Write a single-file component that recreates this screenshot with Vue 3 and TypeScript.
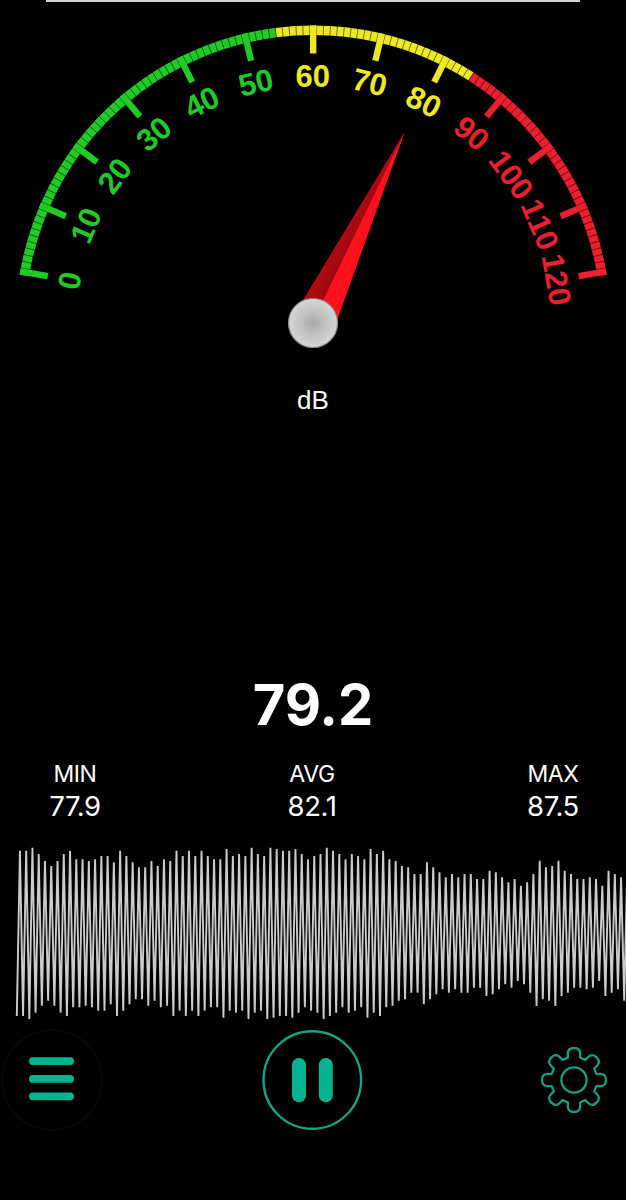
<script setup lang="ts">
interface Stat {
  label: string
  value: string
}

const CX = 313.2
const CY = 323
const OUTER = 297.5
const BAND = 9.5
const DEG_PER_DB = 160 / 120

const angleOf = (db: number): number => (db - 60) * DEG_PER_DB

const colorOf = (db: number): string => {
  if (db < 54.5) return '#20cb26'
  if (db < 84.5) return '#ece924'
  return '#eb1f2d'
}

const pointAt = (db: number, radius: number): string => {
  const a = (angleOf(db) * Math.PI) / 180
  return `${(CX + radius * Math.sin(a)).toFixed(2)} ${(CY - radius * Math.cos(a)).toFixed(2)}`
}

const arc = (from: number, to: number): string => {
  const r = OUTER - BAND / 2
  return `M${pointAt(from, r)}A${r} ${r} 0 0 1 ${pointAt(to, r)}`
}

const zones = [
  { d: arc(-0.5, 54.5), color: '#20cb26' },
  { d: arc(54.5, 84.5), color: '#ece924' },
  { d: arc(84.5, 120.5), color: '#eb1f2d' },
]

const separators = Array.from({ length: 120 }, (_, i) => angleOf(i + 0.5))

const majors = Array.from({ length: 13 }, (_, i) => ({
  value: i * 10,
  angle: angleOf(i * 10),
  color: colorOf(i * 10),
}))

const reading = '79.2'
const stats: Stat[] = [
  { label: 'MIN', value: '77.9' },
  { label: 'AVG', value: '82.1' },
  { label: 'MAX', value: '87.5' },
]

// Distance of every peak from the top of the wave strip, in thirds of a pixel.
const peaks = [
  47, 47, 38, 57, 78, 93, 78, 57, 47, 73, 73, 78, 73, 63, 63, 82, 47, 63, 82, 97, 97, 78, 93, 73, 78,
  47, 63, 47, 63, 47, 63, 73, 73, 42, 63, 57, 63, 38, 57, 63, 38, 42, 47, 47, 42, 57, 73, 63, 57, 38,
  47, 57, 73, 57, 63, 73, 42, 57, 47, 73, 78, 93, 97, 117, 117, 82, 97, 112, 127, 117, 127, 117, 117,
  132, 132, 107, 112, 127, 142, 132, 152, 142, 117, 77, 97, 93, 77, 107, 117, 132, 132, 127, 132, 152,
  107, 117, 127, 93,
]
const STEP = 6.262
const wave = peaks
  .map((p, i) => {
    const x = 16.8 + i * STEP
    return `${x.toFixed(2)},${((590 - p) / 3).toFixed(2)} ${(x + STEP / 2).toFixed(2)},${(p / 3).toFixed(2)}`
  })
  .join(' ')

// One tooth repeated eight times around the origin.
const tooth: [string, number[][]][] = [
  ['L', [[-18.5, -67]]],
  ['L', [[-18.5, -79]]],
  ['C', [[-18.5, -90], [-12, -96], [0, -96]]],
  ['C', [[12, -96], [18.5, -90], [18.5, -79]]],
  ['L', [[18.5, -67]]],
]
const gear =
  Array.from({ length: 8 }, (_, k) => {
    const a = (k * Math.PI) / 4
    return tooth
      .map(([cmd, pts], i) => {
        const op = k === 0 && i === 0 ? 'M' : cmd
        const coords = pts.map(([x, y]) => {
          const rx = x * Math.cos(a) - y * Math.sin(a)
          const ry = x * Math.sin(a) + y * Math.cos(a)
          return `${(rx / 3).toFixed(2)} ${(ry / 3).toFixed(2)}`
        })
        return op + coords.join(' ')
      })
      .join('')
  }).join('') + 'Z'
</script>

<template>
  <main class="meter">
    <div class="topline"></div>

    <svg class="gauge" viewBox="0 0 626 428" width="626" height="428">
      <defs>
        <radialGradient id="hub">
          <stop offset="0" stop-color="#a9a9a9" />
          <stop offset="0.55" stop-color="#c4c4c4" />
          <stop offset="1" stop-color="#d6d6d6" />
        </radialGradient>
        <linearGradient id="shade" gradientUnits="userSpaceOnUse" x1="328" y1="236" x2="362" y2="254">
          <stop offset="0" stop-color="#b80c13" />
          <stop offset="0.45" stop-color="#a80a10" />
          <stop offset="1" stop-color="#7c060a" />
        </linearGradient>
      </defs>

      <path v-for="z in zones" :key="z.color" :d="z.d" :stroke="z.color" :stroke-width="BAND" fill="none" />
      <line
        v-for="a in separators"
        :key="a"
        class="separator"
        :x1="CX"
        :x2="CX"
        :y1="CY - OUTER - 0.5"
        :y2="CY - OUTER + BAND + 0.5"
        :transform="`rotate(${a} ${CX} ${CY})`"
      />
      <g v-for="m in majors" :key="m.value" :transform="`rotate(${m.angle} ${CX} ${CY})`" :fill="m.color">
        <rect :x="CX - 3.2" :y="CY - OUTER" width="6.4" height="28" />
        <text class="mark" :x="CX - 0.5" y="86.5">{{ m.value }}</text>
      </g>

      <polygon points="404.8,131.5 295,313.5 313,322 335.5,324" fill="url(#shade)" />
      <polygon points="404.8,131.5 313,321 336,323" fill="#ff101d" />
      <circle cx="313" cy="323" r="24.5" fill="url(#hub)" stroke="#8c8c8c" stroke-width="1.2" />
      <text class="unit" x="313" y="409">dB</text>
    </svg>

    <div class="reading">{{ reading }}</div>

    <div class="stats">
      <div v-for="s in stats" :key="s.label" class="stat">
        <span class="label">{{ s.label }}</span>
        <span class="value">{{ s.value }}</span>
      </div>
    </div>

    <svg class="wave" viewBox="0 0 626 192" width="626" height="192">
      <polyline :points="wave" />
    </svg>

    <nav class="controls">
      <button class="control menu" aria-label="Menu">
        <svg viewBox="0 0 104 104" width="104" height="104">
          <circle cx="52" cy="52" r="50" stroke="#03090b" stroke-width="2" fill="none" />
          <g fill="#04b491">
            <rect x="29" y="29.2" width="45" height="7.8" rx="3.9" />
            <rect x="29" y="47" width="45" height="7.8" rx="3.9" />
            <rect x="29" y="64.4" width="45" height="7.8" rx="3.9" />
          </g>
        </svg>
      </button>
      <button class="control pause" aria-label="Pause">
        <svg viewBox="0 0 104 104" width="104" height="104">
          <circle cx="51.3" cy="52" r="48.8" stroke="#16a386" stroke-width="2.4" fill="none" />
          <g fill="#04b491">
            <rect x="31" y="30" width="14" height="44.3" rx="7" />
            <rect x="57.8" y="30" width="14" height="44.3" rx="7" />
          </g>
        </svg>
      </button>
      <button class="control settings" aria-label="Settings">
        <svg viewBox="-52 -52 104 104" width="104" height="104">
          <g stroke="#169e82" stroke-width="2.3" fill="none" stroke-linejoin="round">
            <path :d="gear" />
            <circle r="12.6" />
          </g>
        </svg>
      </button>
    </nav>
  </main>
</template>

<style>
html,
body {
  background: #000;
}
</style>

<style scoped>
.meter {
  display: flex;
  flex-direction: column;
  width: 626px;
  height: 1200px;
  overflow: hidden;
  background: #000;
  color: #fff;
  font-family: Inter, 'Liberation Sans', sans-serif;
}
.topline {
  flex: none;
  width: 534px;
  height: 2px;
  margin: 0 0 -2px 46px;
  background: #d0d5d9;
}
.gauge,
.wave,
.control svg {
  display: block;
  flex: none;
}
.separator {
  stroke: #000;
  stroke-opacity: 0.7;
  stroke-width: 0.7;
}
.mark {
  font: bold 31px 'Liberation Sans', Arial, sans-serif;
  font-kerning: none;
  text-anchor: middle;
}
.unit {
  font: 26px 'Liberation Sans', Arial, sans-serif;
  text-anchor: middle;
  fill: #fff;
}
.reading {
  flex: none;
  height: 70px;
  margin-top: 241.5px;
  margin-bottom: 0.5px;
  font-size: 56px;
  font-weight: 700;
  line-height: 70px;
  text-align: center;
}
.stats {
  display: flex;
  flex: none;
  justify-content: space-between;
  height: 95px;
  padding: 18px 13px 0 15px;
  box-sizing: border-box;
}
.stat {
  display: flex;
  flex-direction: column;
  align-items: center;
  width: 120px;
}
.stat:nth-child(2) {
  margin-right: 4px;
}
.label {
  font-size: 23px;
  line-height: 32px;
  letter-spacing: -0.4px;
}
.value {
  font-size: 27.5px;
  line-height: 33px;
  letter-spacing: -0.4px;
}
.wave {
  overflow: hidden;
}
.wave polyline {
  fill: none;
  stroke: #cbcbcb;
  stroke-width: 1.9;
  stroke-linejoin: bevel;
}
.controls {
  display: flex;
  flex: none;
  justify-content: space-between;
  margin-top: 1px;
}
.control {
  padding: 0;
  border: 0;
  background: none;
}
</style>
